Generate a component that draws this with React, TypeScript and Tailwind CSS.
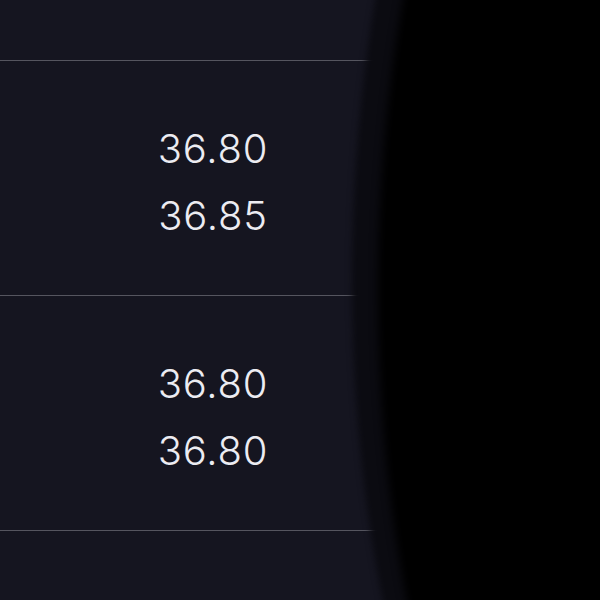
const rows = [
  ["36.80", "36.85"],
  ["36.80", "36.80"],
];

export default function App() {
  return (
    <div
      className="relative h-[600px] w-[600px] overflow-hidden bg-[#151520] text-[#ececf2]"
      style={{ fontFamily: "Inter, 'Noto Sans', sans-serif" }}
    >
      <div className="h-[61px] border-b border-[#55555f]" />
      {rows.map((r, i) => (
        <div key={i} className="grid h-[235px] grid-cols-[426px_1fr] border-b border-[#55555f]">
          <div className="flex flex-col items-center justify-center gap-[22px] pt-[8px] text-[40px] font-light leading-[45px] tracking-[0.8px]">
            <span>{r[0]}</span>
            <span>{r[1]}</span>
          </div>
          <div />
        </div>
      ))}

      {/* dark shape on the right */}
      <div className="absolute left-[352px] top-[-470px] h-[1500px] w-[640px] rounded-[50%] bg-[#0b0b11] blur-[3px]" />
      <div className="absolute left-[378px] top-[-460px] h-[1500px] w-[640px] rounded-[50%] bg-black blur-[4px]" />
    </div>
  );
}
